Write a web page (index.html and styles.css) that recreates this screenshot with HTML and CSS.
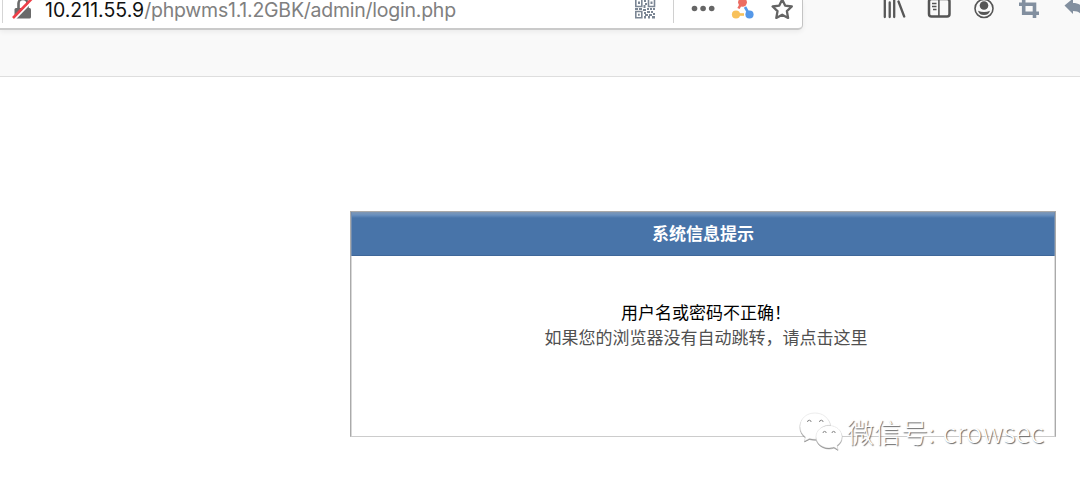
FILE: index.html
```html
<!DOCTYPE html>
<html lang="zh-CN">
<head>
<meta charset="utf-8">
<title>系统信息提示</title>
<link rel="stylesheet" href="styles.css">
</head>
<body>
<header class="toolbar">
  <div class="urlbar">
    <span class="divider"></span>
    <svg class="lock" width="22" height="20" viewBox="0 0 22 20">
      <path d="M6.500 9V3.500a4.500 4.500 0 0 1 9 0V9" fill="none" stroke="#6a6a6a" stroke-width="2.600"/>
      <rect x="2.500" y="8" width="16.500" height="10.500" rx="1.500" fill="#6a6a6a"/>
      <path d="M2.800 19 22.800-1.500" stroke="#fff" stroke-width="2"/>
      <path d="M1 18 21 -2.500" stroke="#ee3f48" stroke-width="2.600"/>
    </svg>
    <div class="url"><span class="host">10.211.55.9</span><span class="path">/phpwms1.1.2GBK/admin/login.php</span></div>
    <svg class="actions" width="164" height="28" viewBox="0 0 164 28">
      <g fill="none" stroke="#7b8694" stroke-width="1.600">
        <path d="M.8-1h6v7.500h-6zM13.500-1h6v7.500h-6zM.8 11.500h6v6.300h-6z"/>
      </g>
      <g fill="#7b8694">
        <path d="M3 1.500h2V4H3zM15.500 1.500h2V4h-2zM3 13.700h1.700v2H3zM9 0h2v2H9zM10 3h2v2h-2zM8.500 5h2v3h-2zM0 8h3v2H0zM4 8h3v2H4zM8 9h3v2H8zM12 8h2v2h-2zM15 8h2v2h-2zM18 8h2v2h-2zM9 12h2v2H9zM12 11h3v2h-3zM16 11h2v2h-2zM18 13h2v2h-2zM10 14h3v2h-3zM14 14h3v2h-3zM9 16h2v2.500H9zM13 16h2v2.500h-2zM17 16h3v2.500h-3z"/>
      </g>
      <path d="M38.500 0v23" stroke="#d0d0d0"/>
      <g fill="#666"><circle cx="59.500" cy="8.500" r="2.800"/><circle cx="68.100" cy="8.500" r="2.800"/><circle cx="76.700" cy="8.500" r="2.800"/></g>
      <g stroke-width="2.600">
        <path d="m107 2-3.500 6.500" stroke="#ec6c62"/>
        <path d="M101 14.500h8" stroke="#f8c15a"/>
        <path d="m110 7 4 7" stroke="#5598e8"/>
      </g>
      <circle cx="107.500" cy="2.300" r="4.400" fill="#ec6c62"/>
      <circle cx="101" cy="14.500" r="4.100" fill="#f8c15a"/>
      <circle cx="114.500" cy="14.500" r="4.100" fill="#5598e8"/>
      <path d="m147.200-.5 2.900 6.100 6.700.9-4.900 4.700 1.200 6.700-5.900-3.200-5.900 3.200 1.200-6.700-4.900-4.700 6.700-.9z" fill="none" stroke="#646464" stroke-width="2.300" stroke-linejoin="round"/>
    </svg>
  </div>
  <svg class="tools" width="200" height="28" viewBox="0 0 200 28">
    <g stroke="#585858" stroke-width="2.300" stroke-linecap="round">
      <path d="M4.800-2V17M9.700 2.500V17M14.200-2V17M18.500 1.500 24.200 16.500"/>
    </g>
    <rect x="49" y="-1" width="20.500" height="17.500" rx="2.500" fill="none" stroke="#555" stroke-width="2.500"/>
    <path d="M58.900 0v16" stroke="#555" stroke-width="1.600"/>
    <path d="M52 3.500h4.500M52 6.500h4.500M53 9.500h3.500" stroke="#555" stroke-width="1.300"/>
    <circle cx="104" cy="8.500" r="9" fill="none" stroke="#555" stroke-width="1.600"/>
    <circle cx="104" cy="5.500" r="4.300" fill="#555"/>
    <path d="M98 10.800q6 2.400 12 0-1 4.200-6 4.200t-6-4.200z" fill="#555"/>
    <path d="M143.700-2v15.200H159M139 4.200h15.500V18" fill="none" stroke="#828f9f" stroke-width="3.600"/>
    <path d="M184.500 5.500 193-1.500V3c7 0 12 4 12 10 0 3-1 5-3 6 0-5-3-8-9-8v3z" fill="#828f9f"/>
  </svg>
</header>
<main class="page">
  <section class="panel">
    <h1 class="panel-title">系统信息提示</h1>
    <div class="panel-body">
      <p class="message">用户名或密码不正确！</p>
      <p class="hint">如果您的浏览器没有自动跳转，请点击这里</p>
    </div>
  </section>
</main>
<div class="watermark">
  <svg class="wechat" width="46" height="40" viewBox="0 0 46 40">
    <g fill="#fff" stroke="#ddd" stroke-width=".5">
      <path d="M16 1C7 1 1 7 1 14.500c0 4.500 2 8 5.500 10.500L5.500 29l5-2.500c2 .6 4 .9 6.500.7C17 19 23 13 31.500 13 30 6 24 1 16 1z"/>
      <path d="M30 13.500c-7.200 0-13 5-13 11.200s5.800 11.200 13 11.200c2 0 3.500-.3 5-.8l4 2.300-1-4c3-2 5-4.900 5-8.700 0-6.200-5.800-11.200-13-11.200z"/>
    </g>
    <g fill="none" stroke="#888" stroke-width="1">
      <path d="M8.500 10a1.800 1.800 0 0 1 3.600 0M20.500 10a1.800 1.800 0 0 1 3.600 0M24 21a1.600 1.600 0 0 1 3.200 0M33 21a1.600 1.600 0 0 1 3.200 0"/>
    </g>
  </svg>
  <span class="watermark-text">微信号<span class="colon">:</span><span class="account">crowsec</span></span>
</div>
</body>
</html>
```
FILE: styles.css
```css
* { box-sizing: border-box; }
body {
  margin: 0;
  height: 481px;
  overflow: hidden;
  position: relative;
  background: #fff;
  font-family: "Liberation Sans", "Noto Sans CJK SC", sans-serif;
}
.toolbar {
  display: flex;
  justify-content: space-between;
  align-items: flex-start;
  height: 77px;
  background: #f9f9f9;
  border-bottom: 1px solid #dedede;
}
.urlbar {
  display: flex;
  align-items: flex-start;
  width: 803px;
  height: 30px;
  background: #fff;
  border-right: 1px solid #c4c4c4;
  border-bottom: 2px solid #cacaca;
  border-radius: 0 0 5px 0;
  box-shadow: 0 2px 5px rgba(0, 0, 0, .06);
}
.divider { width: 1px; height: 23px; margin-left: 2px; background: #d5d5d5; }
.lock { margin-left: 9px; flex: none; }
.url {
  flex: none;
  margin-left: 11px;
  width: 590px;
  font: 19.500px/20px Inter, sans-serif;
  white-space: nowrap;
}
.host { color: #111; }
.path { color: #808080; letter-spacing: -.24px; }
.actions, .tools { flex: none; }
.page { padding: 134px 24px 0 350px; }
.panel {
  height: 226px;
  border: 1px solid #aaa;
  border-bottom-color: #ccc;
  box-shadow: inset 1px 0 #d8d8d8, inset -1px 0 #ddd;
}
.panel-title {
  margin: 0;
  height: 44px;
  background: linear-gradient(#8097b3 0, #6990bf 3px, #4874a9 6px, #4874a9 43px, #3f6799 43px);
  box-shadow: inset 1px 0 #718caf, inset -1px 0 #718caf;
  color: #fff;
  font: bold 17px/42px "Noto Sans CJK SC", sans-serif;
  text-align: center;
}
.panel-body {
  padding: 43px 0 0 6px;
  font: 17px/25px "Noto Sans CJK SC", sans-serif;
  text-align: center;
}
.message, .hint { margin: 0; }
.message { color: #000; }
.hint { color: #505050; }
.watermark {
  position: absolute;
  left: 799px;
  top: 412px;
  display: flex;
  align-items: flex-start;
}
.wechat { filter: drop-shadow(.7px 1px .3px #888); }
.watermark-text {
  margin-left: 2px;
  color: #fff;
  font: 300 27px/40px "Noto Sans CJK SC", sans-serif;
  text-shadow: 1px 1px 1px #666;
  white-space: nowrap;
}
.colon { margin-right: 8px; }
.account { letter-spacing: .25px; }
```
